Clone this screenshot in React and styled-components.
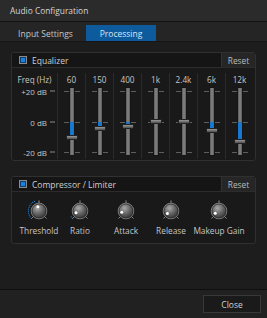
import React from 'react';
import styled, { createGlobalStyle } from 'styled-components';

const blue = '#1a7fdc';
const text = '#c6c6c6';

const GlobalStyle = createGlobalStyle`
  html, body {
    margin: 0;
    padding: 0;
    background: #1d1d1d;
  }

  * {
    box-sizing: border-box;
  }
`;

const Window = styled.div`
  width: 267px;
  height: 318px;
  display: flex;
  flex-direction: column;
  background: #1d1d1d;
  font-family: 'Open Sans', 'Noto Sans', sans-serif;
  font-size: 8.3px;
  color: ${text};
  overflow: hidden;
`;

const TitleBar = styled.div`
  flex: none;
  height: 22px;
  display: flex;
  align-items: center;
  padding-left: 10px;
  background: #2b2b2b;
  border-bottom: 1px solid #121212;
  color: #d6d6d6;
  font-size: 8.4px;
`;

const TabBar = styled.div`
  flex: none;
  display: flex;
  height: 20px;
  padding: 3px 0 0 5px;
  background: #252525;
  border-bottom: 1px solid #161616;
`;

const Tab = styled.div`
  width: ${(p) => p.$width}px;
  display: flex;
  align-items: center;
  justify-content: center;
  font-size: 8.5px;
  color: ${(p) => (p.$active ? '#d8e6f4' : text)};
  background: ${(p) => (p.$active ? '#0d5a9c' : 'transparent')};
`;

const Content = styled.div`
  flex: 1;
  display: flex;
  flex-direction: column;
  gap: 15px;
  padding: 10px 11px 0 11px;
`;

const Panel = styled.section`
  background: #191919;
  border: 1px solid #303030;
  border-radius: 3px;
  overflow: hidden;
`;

const PanelHeader = styled.div`
  height: 15px;
  display: flex;
  align-items: center;
  padding-left: 7px;
  background: #151515;
  border-bottom: 1px solid #2c2c2c;
`;

const Check = styled.span`
  width: 8px;
  height: 8px;
  margin-right: 5px;
  background: ${blue};
  border: 1px solid #8a8a8a;
  box-shadow: inset 0 0 0 1px #0c3f70;
`;

const PanelTitle = styled.span`
  font-size: 8.5px;
  color: #cfcfcf;
`;

const ResetButton = styled.button`
  margin-left: auto;
  width: 34px;
  height: 100%;
  padding: 0;
  border: none;
  border-left: 1px solid #333;
  background: #262626;
  color: #bdbdbd;
  font-family: inherit;
  font-size: 8.3px;
`;

const EqBody = styled.div`
  display: flex;
  height: 92px;
  padding-top: 5px;
`;

const ScaleColumn = styled.div`
  width: 45px;
  display: flex;
  flex-direction: column;
`;

const BandColumn = styled.div`
  width: 28px;
  height: 86px;
  display: flex;
  flex-direction: column;
  border-left: 1px solid #2b2b2b;
`;

const BandLabel = styled.div`
  height: 14px;
  line-height: 14px;
  text-align: center;
  font-size: 8.2px;
  white-space: nowrap;
`;

const FaderArea = styled.div`
  position: relative;
  height: 70px;
`;

const ScaleMark = styled.div`
  position: absolute;
  right: 0;
  display: flex;
  align-items: center;
  gap: 3px;
  transform: translateY(-50%);
  font-size: 8px;
  white-space: nowrap;

  &::after {
    content: '';
    width: 5px;
    height: 1px;
    margin-right: 2px;
    background: #8a8a8a;
  }
`;

const Tick = styled.span`
  position: absolute;
  left: 50%;
  width: 16px;
  height: 1px;
  margin-left: -8px;
  background: #5e5e5e;
`;

const Track = styled.span`
  position: absolute;
  left: 50%;
  top: 1px;
  bottom: 2px;
  width: 4px;
  margin-left: -2px;
  background: linear-gradient(90deg, #5a5a5a, #858585 50%, #5a5a5a);
  box-shadow: 0 0 0 1px #151515;
`;

const Fill = styled.span`
  position: absolute;
  left: 50%;
  width: 4px;
  margin-left: -2px;
  background: #1878d0;
`;

const Thumb = styled.span`
  position: absolute;
  left: 50%;
  width: 12px;
  height: 5px;
  margin-left: -6px;
  margin-top: -2.5px;
  background: linear-gradient(180deg, #9a9a9a, #6a6a6a 60%, #4e4e4e);
  border: 1px solid #222;
  border-radius: 1px;
`;

const KnobRow = styled.div`
  display: grid;
  grid-template-columns: 42px 40px 52px 38px 58px;
  height: 51px;
  padding: 5px 0 0 6px;
`;

const KnobItem = styled.div`
  display: flex;
  flex-direction: column;
  align-items: center;
`;

const KnobLabel = styled.div`
  line-height: 12px;
  font-size: 8.3px;
  white-space: nowrap;
`;

const Footer = styled.div`
  flex: none;
  height: 29px;
  display: flex;
  align-items: center;
  justify-content: flex-end;
  padding-right: 6px;
  background: #212121;
  border-top: 1px solid #0f0f0f;
`;

const CloseButton = styled.button`
  width: 58px;
  height: 18px;
  padding: 0;
  background: #1a1a1a;
  border: 1px solid #383838;
  color: #d0d0d0;
  font-family: inherit;
  font-size: 8.5px;
`;

const bands = [
  { label: '60', db: -10.8 },
  { label: '150', db: -4.9 },
  { label: '400', db: -3 },
  { label: '1k', db: 0 },
  { label: '2.4k', db: 0 },
  { label: '6k', db: -5.6 },
  { label: '12k', db: -12.8 },
];

const dbToY = (db) => 34.5 - db * 1.525;

function Fader({ db }) {
  const zero = dbToY(0);
  const y = dbToY(db);
  return (
    <FaderArea>
      <Tick style={{ top: dbToY(20) }} />
      <Tick style={{ top: zero }} />
      <Tick style={{ top: dbToY(-20) }} />
      <Track />
      {db !== 0 && <Fill style={{ top: Math.min(zero, y), height: Math.abs(y - zero) }} />}
      <Thumb style={{ top: y }} />
    </FaderArea>
  );
}

const knobs = [
  { label: 'Threshold', angle: -15, arc: true },
  { label: 'Ratio', angle: -115, arc: true },
  { label: 'Attack', angle: -105 },
  { label: 'Release', angle: -125 },
  { label: 'Makeup Gain', angle: -120 },
];

const polar = (r, deg) => {
  const a = ((deg - 90) * Math.PI) / 180;
  return [14 + r * Math.cos(a), 14 + r * Math.sin(a)];
};

function Knob({ angle, arc, id }) {
  const dots = [];
  if (arc) {
    for (let d = -135; d <= angle; d += 11) {
      const [x, y] = polar(10.6, d);
      dots.push(<circle key={d} cx={x} cy={y} r="0.6" fill={blue} />);
    }
  }
  const [ix, iy] = polar(4.4, angle);
  const line = (deg) => {
    const [x1, y1] = polar(8, deg);
    const [x2, y2] = polar(10.6, deg);
    return <line x1={x1} y1={y1} x2={x2} y2={y2} stroke="#8c8c8c" strokeWidth="1" />;
  };
  return (
    <svg width="28" height="28" viewBox="0 0 28 28">
      <defs>
        <radialGradient id={id} cx="40%" cy="32%" r="75%">
          <stop offset="0%" stopColor="#a8a8a8" />
          <stop offset="55%" stopColor="#5c5c5c" />
          <stop offset="100%" stopColor="#2c2c2c" />
        </radialGradient>
      </defs>
      {dots}
      {line(0)}
      {line(-135)}
      {line(135)}
      <circle cx="14" cy="14" r="7.8" fill={`url(#${id})`} stroke="#9a9a9a" strokeWidth="0.8" />
      <circle cx="14" cy="14" r="7" fill="none" stroke="#1a1a1a" strokeWidth="0.6" />
      <circle cx={ix} cy={iy} r="1.5" fill="#ffffff" />
    </svg>
  );
}

export default function App() {
  return (
    <Window>
      <GlobalStyle />
      <TitleBar>Audio Configuration</TitleBar>

      <TabBar>
        <Tab $width={81}>Input Settings</Tab>
        <Tab $width={70} $active>Processing</Tab>
      </TabBar>

      <Content>
        <Panel>
          <PanelHeader>
            <Check />
            <PanelTitle>Equalizer</PanelTitle>
            <ResetButton>Reset</ResetButton>
          </PanelHeader>
          <EqBody>
            <ScaleColumn>
              <BandLabel>Freq (Hz)</BandLabel>
              <FaderArea>
                <ScaleMark style={{ top: dbToY(20) }}>+20 dB</ScaleMark>
                <ScaleMark style={{ top: dbToY(0) }}>0 dB</ScaleMark>
                <ScaleMark style={{ top: dbToY(-20) }}>-20 dB</ScaleMark>
              </FaderArea>
            </ScaleColumn>
            {bands.map((b) => (
              <BandColumn key={b.label}>
                <BandLabel>{b.label}</BandLabel>
                <Fader db={b.db} />
              </BandColumn>
            ))}
          </EqBody>
        </Panel>

        <Panel>
          <PanelHeader>
            <Check />
            <PanelTitle>Compressor / Limiter</PanelTitle>
            <ResetButton>Reset</ResetButton>
          </PanelHeader>
          <KnobRow>
            {knobs.map((k, i) => (
              <KnobItem key={k.label}>
                <Knob angle={k.angle} arc={k.arc} id={`knob-${i}`} />
                <KnobLabel>{k.label}</KnobLabel>
              </KnobItem>
            ))}
          </KnobRow>
        </Panel>
      </Content>

      <Footer>
        <CloseButton>Close</CloseButton>
      </Footer>
    </Window>
  );
}
